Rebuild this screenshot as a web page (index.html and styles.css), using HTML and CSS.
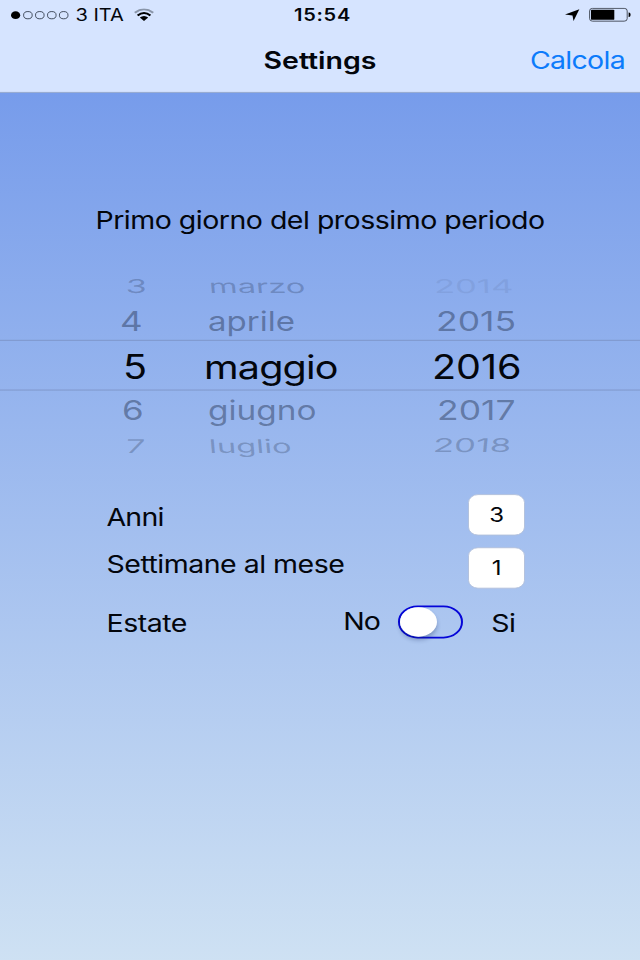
FILE: index.html
```html
<!DOCTYPE html>
<html lang="it">
<head>
<meta charset="utf-8">
<title>Settings</title>
<link rel="stylesheet" href="styles.css">
</head>
<body>
<div class="window">
<div class="screen">
  <header class="header">
    <div class="status">
      <div class="carrier">
        <svg class="dots" width="58" height="12" viewBox="0 0 58 12"><circle cx="4.6" cy="6" r="4.6"/><g fill="none" stroke="#27303f" stroke-width=".9"><circle cx="16.9" cy="6" r="4.3"/><circle cx="28.8" cy="6" r="4.3"/><circle cx="40.8" cy="6" r="4.3"/><circle cx="52.7" cy="6" r="4.3"/></g></svg>
        <span class="operator">3 ITA</span>
        <svg class="wifi" width="20" height="15" viewBox="0 0 20 15"><g fill="none" stroke="#000" stroke-width="2.3"><path d="M.8 5Q10-3 19.2 5" stroke="#8995a9"/><path d="M3.6 8.4Q10 2.6 16.4 8.4"/></g><path d="M5.8 10.8Q10 7.2 14.2 10.8L10 14.8Z"/></svg>
      </div>
      <span class="clock">15:54</span>
      <div class="power">
        <svg width="15" height="16" viewBox="0 0 16 16"><path d="M15.3.5 9.1 15.4 8 8.3 0 7.2Z"/></svg>
        <svg width="42" height="17" viewBox="0 0 42 17"><rect x=".6" y=".9" width="37.6" height="15.2" rx="3" fill="none" stroke="#3f4653" stroke-width="1"/><rect x="2" y="2.5" width="23.3" height="12" rx="1"/><path d="M39.6 5.8h.6q1.4.3 1.4 2.7t-1.4 2.7h-.6z"/></svg>
      </div>
    </div>
    <nav class="nav">
      <span></span>
      <h1 class="title">Settings</h1>
      <a class="action">Calcola</a>
    </nav>
  </header>
  <main>
    <p class="prompt">Primo giorno del prossimo periodo</p>
    <div class="picker">
      <div class="row far above"><span class="day">3</span><span class="month">marzo</span><span class="year faint">2014</span></div>
      <div class="row near above"><span class="day">4</span><span class="month">aprile</span><span class="year">2015</span></div>
      <div class="row selected"><span class="day">5</span><span class="month">maggio</span><span class="year">2016</span></div>
      <div class="row near below"><span class="day">6</span><span class="month">giugno</span><span class="year">2017</span></div>
      <div class="row far below"><span class="day">7</span><span class="month">luglio</span><span class="year">2018</span></div>
    </div>
    <div class="form">
      <div class="field years"><label>Anni</label><span class="box">3</span></div>
      <div class="field weeks"><label>Settimane al mese</label><span class="box">1</span></div>
      <div class="field summer"><label>Estate</label><span class="no">No</span><span class="switch"><i class="knob"></i></span><span class="yes">Si</span></div>
    </div>
  </main>
</div>
</div>
</body>
</html>
```
FILE: styles.css
```css
* { box-sizing: border-box; margin: 0; }
svg { display: block; }
.window { width: 640px; height: 960px; overflow: hidden; }

/* Tall 640-wide layout, squeezed vertically into the window. */
.screen {
  width: 640px;
  height: 1140px;
  transform: scaleY(.8433);
  transform-origin: 0 0;
  background: linear-gradient(#779ceb 110px, #cee1f3 100%);
  font-family: Inter, "Liberation Sans", sans-serif;
  font-size: 28.5px;
  line-height: 36px;
  letter-spacing: -.5px;
  color: #03060c;
}
.header { height: 110.3px; background: #d6e4ff; border-bottom: 1px solid #8ca0c6; }
.status {
  display: grid;
  grid-template-columns: 1fr auto 1fr;
  align-items: center;
  height: 35px;
  padding: 0 9px 0 11px;
  font-size: 20px;
  letter-spacing: 0;
}
.carrier, .power { display: flex; align-items: center; }
.operator { margin-left: 6.5px; }
.wifi { margin-left: 10.5px; }
.clock { padding-left: 3px; font-weight: 600; letter-spacing: .7px; }
.power { justify-content: flex-end; gap: 9px; }
.power svg, .carrier svg { margin-bottom: 1px; }
.nav {
  display: grid;
  grid-template-columns: 1fr auto 1fr;
  align-items: center;
  height: 74px;
  padding: 0 15px;
}
.title { font-size: 28.5px; font-weight: 600; line-height: 36px; letter-spacing: 0; }
.action { justify-self: end; color: #0c7bfb; letter-spacing: -.7px; }
.prompt { margin-top: 132.5px; text-align: center; white-space: nowrap; }

.picker { margin-top: 38.5px; letter-spacing: 0; }
.row {
  display: grid;
  grid-template-columns: 80px 228px 100px;
  align-items: center;
  padding-left: 124px;
  height: 43px;
}
.row span { justify-self: start; transform-origin: 0 50%; white-space: nowrap; }
.near { color: rgba(24, 38, 64, .42); font-size: 35px; }
.far { color: rgba(24, 38, 64, .26); font-size: 32px; }
.near .day { transform: translate(-4px, -1px) scaleY(.92); }
.near .month { transform: translate(4px, -1px) scale(.945, .92); }
.near .year { transform: translate(4px, -1px) scale(1.015, .92); }
.near.below .day { transform: translate(-2px, 1px) scaleY(.92); }
.near.below .month { transform: translate(4px, 1px) scale(.955, .92); }
.near.below .year { transform: translate(5px, 1px) scale(1.015, .92); }
.far .day { transform: translate(2px, 1px) scale(1.06, .7) skewX(-2deg); }
.far .month { transform: translate(5px, 1px) scale(1.02, .7) skewX(3deg); }
.far .year { transform: translate(1px, 0) scale(1.08, .7) skewX(-3deg); }
.far .faint { opacity: .3; transform: translate(2px, 1px) scale(1.08, .7) skewX(1deg); }
.selected {
  height: 60px;
  padding-top: 3px;
  border: solid #7b92c4;
  border-width: 1px 0;
  font-size: 39.5px;
}
.selected .day { transform: translate(-1px, 0); }
.selected .month { letter-spacing: -.8px; }

.form { padding: 0 115px 0 106.5px; margin-top: 37px; }
.field { display: flex; align-items: center; justify-content: space-between; }
.box {
  width: 57px;
  height: 49px;
  border: 1px solid #b0bfda;
  border-radius: 10px;
  background: #fff;
  text-align: center;
  font-size: 24px;
  line-height: 47px;
}
.years label { padding-top: 6px; letter-spacing: -.8px; }
.weeks { margin-top: 14px; }
.weeks label { padding-bottom: 7px; }
.summer { margin: 20px 9.5px 0 0; justify-content: flex-start; }
.summer label, .yes { padding-top: 2px; }
.no { margin-left: auto; padding-bottom: 1px; letter-spacing: -1px; }
.switch {
  width: 65px;
  height: 39px;
  margin: 0 28px 0 18.5px;
  border: 2px solid #0505d8;
  border-radius: 20px;
}
.knob {
  display: block;
  width: 37px;
  height: 35px;
  border-radius: 50%;
  background: #fff;
  box-shadow: 0 4px 5px rgba(20, 40, 90, .3);
}
```
